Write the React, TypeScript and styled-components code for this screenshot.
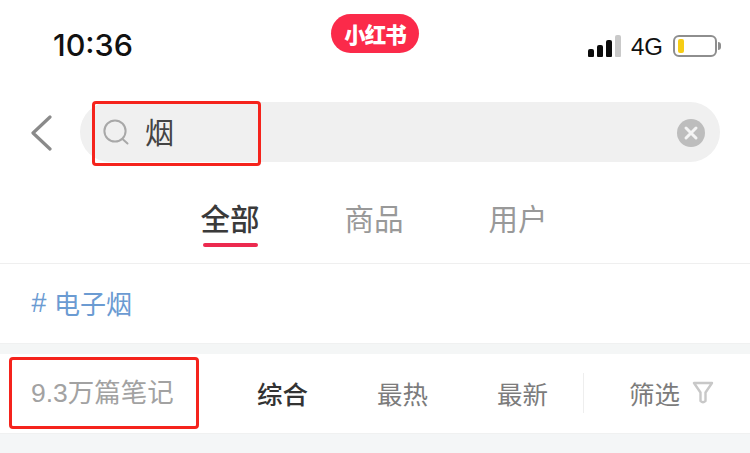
import React from "react";
import styled, { createGlobalStyle } from "styled-components";

const Global = createGlobalStyle`
  html, body { margin: 0; padding: 0; background: #fff; }
  body { font-family: "Liberation Sans", "Noto Sans CJK SC", sans-serif; }
`;

const CJK = `"Noto Sans CJK SC", "Liberation Sans", sans-serif`;

const Page = styled.div`
  position: relative;
  width: 750px;
  height: 453px;
  overflow: hidden;
  background: #fff;
`;

const StatusBar = styled.div`
  position: relative;
  height: 102px;
  display: flex;
  justify-content: space-between;
  align-items: flex-start;
  padding: 28px 29px 0 53px;
  box-sizing: border-box;
`;

const Time = styled.div`
  font-family: "Inter", sans-serif;
  font-size: 30.5px;
  line-height: 34px;
  font-weight: 500;
  color: #111;
`;

const Logo = styled.div`
  position: absolute;
  left: 331px;
  top: 14px;
  width: 88px;
  height: 39px;
  border-radius: 20px;
  background: #fb2a4a;
  color: #fff;
  font-family: ${CJK};
  font-weight: 900;
  font-size: 21.5px;
  line-height: 39px;
  letter-spacing: -1px;
  text-align: center;
`;

const Status = styled.div`
  display: flex;
  align-items: center;
  height: 36px;
`;

const Signal = styled.div`
  display: flex;
  align-items: flex-end;
  gap: 3px;
  height: 22px;
  margin-top: -1px;
`;

const Bar = styled.span<{ $h: number; $off?: boolean }>`
  width: 6px;
  height: ${(p) => p.$h}px;
  border-radius: 2px 2px 1px 1px;
  background: ${(p) => (p.$off ? "#c9c9c9" : "#0c0c0c")};
`;

const Net = styled.div`
  font-family: "Liberation Sans", sans-serif;
  font-size: 24px;
  line-height: 28px;
  color: #111;
  margin: 1px 10px 0 10px;
`;

const Battery = styled.div`
  display: flex;
  align-items: center;
  gap: 1px;
`;

const BatteryBody = styled.div`
  width: 44px;
  height: 22px;
  box-sizing: border-box;
  border: 2px solid #8e8e8e;
  border-radius: 6px;
  padding: 2px 3px;
`;

const BatteryFill = styled.div`
  width: 6px;
  height: 100%;
  border-radius: 2px;
  background: #f6cd15;
`;

const BatteryNub = styled.div`
  width: 3px;
  height: 8px;
  border-radius: 0 3px 3px 0;
  background: #8e8e8e;
`;

const SearchRow = styled.div`
  display: flex;
  align-items: center;
  height: 60px;
  padding: 0 30px;
  gap: 28px;
`;

const BackButton = styled.svg`
  flex: none;
  width: 22px;
  height: 36px;
  margin-top: 1px;
`;

const SearchBox = styled.div`
  flex: 1;
  height: 60px;
  border-radius: 30px;
  background: #f0f0f0;
  display: flex;
  align-items: center;
  padding: 0 15px 0 23px;
`;

const SearchIcon = styled.svg`
  flex: none;
  width: 26px;
  height: 26px;
  margin-top: -1px;
`;

const Query = styled.div`
  flex: 1;
  margin-left: 16px;
  margin-top: -2px;
  font-family: ${CJK};
  font-size: 29px;
  line-height: 40px;
  color: #444;
`;

const ClearIcon = styled.svg`
  flex: none;
  width: 28px;
  height: 28px;
  margin-top: 2px;
`;

const Tabs = styled.div`
  height: 102px;
  box-sizing: border-box;
  border-bottom: 1px solid #efefef;
  display: flex;
  justify-content: center;
  align-items: flex-start;
  gap: 85px;
  padding: 36px 2px 0 0;
`;

const Tab = styled.div<{ $active?: boolean }>`
  position: relative;
  font-family: ${CJK};
  font-size: 29.5px;
  line-height: 38px;
  font-weight: ${(p) => (p.$active ? 500 : 400)};
  color: ${(p) => (p.$active ? "#3a3a3a" : "#999")};
`;

const TabLine = styled.span`
  position: absolute;
  left: 3px;
  right: 1px;
  top: 45px;
  height: 4px;
  border-radius: 2px;
  background: #ec2a4f;
`;

const TagRow = styled.div`
  height: 79px;
  padding: 20px 31px 0;
  display: flex;
  align-items: flex-start;
  box-sizing: border-box;
  font-family: ${CJK};
  font-size: 26px;
  line-height: 38px;
  color: #6b9bd2;
`;

const Hash = styled.span`
  font-size: 27px;
  font-style: italic;
  margin-right: 8px;
  font-family: "Liberation Sans", sans-serif;
`;

const Band = styled.div`
  height: 11px;
  box-sizing: border-box;
  background: #f4f6f6;
  border-top: 1px solid #f0f1f1;
`;

const FilterRow = styled.div`
  height: 79px;
  display: flex;
  align-items: center;
  font-family: ${CJK};
  font-size: 25.5px;
  line-height: 38px;
  color: #7c7c7c;
  padding: 0 0 2px 31px;
  box-sizing: border-box;
`;

const Count = styled.div`
  width: 226px;
  flex: none;
  color: #a2a2a2;
  font-size: 26.5px;
  font-family: "Liberation Sans", "Noto Sans CJK SC", sans-serif;
`;

const Sort = styled.div<{ $active?: boolean; $w: number }>`
  width: ${(p) => p.$w}px;
  flex: none;
  font-weight: ${(p) => (p.$active ? 500 : 400)};
  color: ${(p) => (p.$active ? "#333" : "#7c7c7c")};
`;

const Divider = styled.div`
  width: 1px;
  height: 40px;
  background: #eeeeee;
  margin-left: -1px;
  margin-right: 45px;
`;

const FilterIcon = styled.svg`
  width: 22px;
  height: 24px;
  margin-left: 12px;
`;

const BottomBand = styled.div`
  height: 20px;
  box-sizing: border-box;
  background: #f4f6f7;
  border-top: 1px solid #f0f1f1;
`;

const Highlight = styled.div<{ $x: number; $y: number; $w: number; $h: number }>`
  position: absolute;
  left: ${(p) => p.$x}px;
  top: ${(p) => p.$y}px;
  width: ${(p) => p.$w}px;
  height: ${(p) => p.$h}px;
  box-sizing: border-box;
  border: 3px solid #f5231c;
  border-radius: 4px;
`;

export default function App() {
  return (
    <Page>
      <Global />
      <StatusBar>
        <Time>10:36</Time>
        <Logo>小红书</Logo>
        <Status>
          <Signal>
            <Bar $h={8} />
            <Bar $h={12} />
            <Bar $h={17} />
            <Bar $h={22} $off />
          </Signal>
          <Net>4G</Net>
          <Battery>
            <BatteryBody>
              <BatteryFill />
            </BatteryBody>
            <BatteryNub />
          </Battery>
        </Status>
      </StatusBar>

      <SearchRow>
        <BackButton viewBox="0 0 22 36">
          <path d="M20 2 L3 18 L20 34" fill="none" stroke="#8a8a8a" strokeWidth="3.2" strokeLinecap="round" strokeLinejoin="round" />
        </BackButton>
        <SearchBox>
          <SearchIcon viewBox="0 0 26 26">
            <circle cx="12" cy="12" r="10.6" fill="none" stroke="#a8a8a8" strokeWidth="2" />
            <path d="M19.5 20 L24.5 24.5" stroke="#a8a8a8" strokeWidth="2" strokeLinecap="round" />
          </SearchIcon>
          <Query>烟</Query>
          <ClearIcon viewBox="0 0 28 28">
            <circle cx="14" cy="14" r="14" fill="#bdbdbd" />
            <path d="M9 9 L19 19 M19 9 L9 19" stroke="#f4f4f4" strokeWidth="3" strokeLinecap="round" />
          </ClearIcon>
        </SearchBox>
      </SearchRow>

      <Tabs>
        <Tab $active>
          全部
          <TabLine />
        </Tab>
        <Tab>商品</Tab>
        <Tab>用户</Tab>
      </Tabs>

      <TagRow>
        <Hash>#</Hash>电子烟
      </TagRow>
      <Band />

      <FilterRow>
        <Count>9.3万篇笔记</Count>
        <Sort $active $w={120}>综合</Sort>
        <Sort $w={120}>最热</Sort>
        <Sort $w={87}>最新</Sort>
        <Divider />
        <span>筛选</span>
        <FilterIcon viewBox="0 0 22 24">
          <path d="M2 2 H20 L13.5 11.5 V20 Q11 22.5 8.5 20 V11.5 Z" fill="none" stroke="#c8c8c8" strokeWidth="2.4" strokeLinejoin="round" />
        </FilterIcon>
      </FilterRow>
      <BottomBand />

      <Highlight $x={92} $y={101} $w={169} $h={65} />
      <Highlight $x={9} $y={357} $w={190} $h={72} />
    </Page>
  );
}
